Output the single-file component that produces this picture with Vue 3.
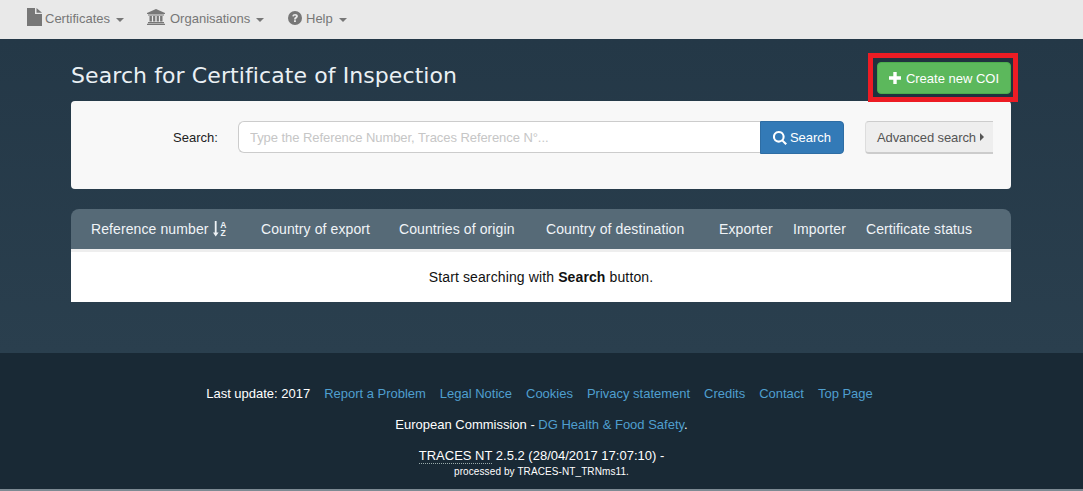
<script setup>
const nav = [
  { label: 'Certificates', icon: 'file' },
  { label: 'Organisations', icon: 'bank' },
  { label: 'Help', icon: 'help' }
]
const cols = ['Country of export', 'Countries of origin', 'Country of destination', 'Exporter', 'Importer', 'Certificate status']
const links = ['Report a Problem', 'Legal Notice', 'Cookies', 'Privacy statement', 'Credits', 'Contact', 'Top Page']
</script>

<template>
  <div class="page">
    <nav class="nav">
      <a v-for="n in nav" :key="n.label" class="nav-item" :class="'ni-' + n.icon">
        <svg v-if="n.icon === 'file'" class="i-file" viewBox="0 0 15 18"><path d="M0 0h8v6h7v12H0zM9.500 0L15 4.700H9.500z" fill="#777"/></svg>
        <svg v-else-if="n.icon === 'bank'" class="i-bank" viewBox="0 0 18 16"><path d="M9 0l9 4v1H0V4zM1 5.600h16v.9H1zM2.500 7h2.400v5.500H2.500zM6.100 7h2.200v5.500H6.100zM9.700 7h2.200v5.500H9.700zM13.100 7h2.400v5.500h-2.400zM1 13h16v1.200H1zM0 14.800h18V16H0z" fill="#777"/></svg>
        <svg v-else class="i-help" viewBox="0 0 14 14"><circle cx="7" cy="7" r="7" fill="#777"/><path d="M4.300 5.200C4.500 3.700 5.700 3 7.100 3c1.500 0 2.800.9 2.800 2.300 0 1.900-2 1.900-2 3.100H6c0-2.200 2-2.200 2-3.100 0-.5-.4-.8-1-.8-.6 0-1 .3-1.200 1zM6 9.300h1.900v1.800H6z" fill="#e9e9e9"/></svg>
        <span class="nav-label">{{ n.label }}</span>
        <i class="caret"></i>
      </a>
    </nav>

    <main class="main">
      <div class="head">
        <h1>Search for Certificate of Inspection</h1>
        <div class="highlight">
          <button class="create">
            <svg class="i-plus" viewBox="0 0 12 12"><path d="M4.300 0h3.400v4.300H12v3.400H7.700V12H4.300V7.700H0V4.300h4.300z" fill="#fff"/></svg>
            Create new COI
          </button>
        </div>
      </div>

      <section class="search-card">
        <label>Search:</label>
        <div class="group">
          <input type="text" placeholder="Type the Reference Number, Traces Reference N°..." />
          <button class="search">
            <svg class="i-search" viewBox="0 0 14 14"><path d="M5.800 0a5.800 5.800 0 0 1 4.700 9.200l3.500 3.300-1.600 1.500-3.400-3.400A5.800 5.800 0 1 1 5.800 0zm0 2a3.800 3.800 0 1 0 0 7.600 3.800 3.800 0 0 0 0-7.600z" fill="#fff"/></svg>
            Search
          </button>
        </div>
        <button class="advanced">Advanced search<i class="caret-right"></i></button>
      </section>

      <section class="table">
        <div class="thead">
          <span class="th first">Reference number
            <svg class="i-sort" viewBox="0 0 14 16"><path d="M1.800 0h1.800v11.500h2L2.700 15.500 0 11.500h1.800z" fill="#eef2f5"/><text x="7.300" y="6.700" class="sort-t">A</text><text x="7.500" y="15.400" class="sort-t">Z</text></svg>
          </span>
          <span v-for="c in cols" :key="c" class="th">{{ c }}</span>
        </div>
        <div class="tbody">Start searching with <b>Search</b> button.</div>
      </section>
    </main>

    <footer class="footer">
      <div class="f-links">
        <span>Last update: 2017</span>
        <a v-for="l in links" :key="l">{{ l }}</a>
      </div>
      <div class="f-ec">European Commission - <a>DG Health &amp; Food Safety</a>.</div>
      <div class="f-ver"><span class="abbr">TRACES NT</span> 2.5.2 (28/04/2017 17:07:10) -</div>
      <div class="f-proc">processed by TRACES-NT_TRNms11.</div>
    </footer>
  </div>
</template>

<style>
html, body { margin: 0; background: #192935; }
</style>

<style scoped>
.page {
  width: 1083px;
  height: 491px;
  overflow: hidden;
  display: flex;
  flex-direction: column;
  font-family: "Liberation Sans", Arial, sans-serif;
  font-size: 13px;
  line-height: 20px;
}
.nav {
  height: 39px;
  flex: none;
  background: #e9e9e9;
  display: flex;
  align-items: center;
  padding: 0 0 2px 27px;
  box-sizing: border-box;
}
.nav-item { display: flex; align-items: center; color: #777; }
.ni-file { width: 120px; }
.ni-bank { width: 141px; }
.nav-label { margin-left: 3px; }
.i-file { width: 15px; height: 18px; margin-top: -3px; }
.i-bank { width: 18px; height: 16px; margin-top: -3px; margin-right: 2px; }
.i-help { width: 14px; height: 14px; margin-top: -2px; margin-right: 1px; }
.caret {
  margin-left: 6px;
  margin-top: 2px;
  width: 0; height: 0;
  border-left: 4px solid transparent;
  border-right: 4px solid transparent;
  border-top: 4px solid #777;
}
.main {
  height: 314px;
  flex: none;
  box-sizing: border-box;
  background: linear-gradient(#243847, #2a3f4e);
  padding: 0 72px 0 71px;
}
.head {
  height: 62px;
  display: flex;
  justify-content: space-between;
  align-items: flex-start;
}
h1 {
  margin: 23px 0 0;
  font-family: "DejaVu Sans", Verdana, sans-serif;
  font-size: 22px;
  font-weight: 400;
  line-height: 27px;
  letter-spacing: .09px;
  color: #eaf0f4;
}
.highlight {
  margin: 14px -7px 0 0;
  border: 5px solid #ed1c24;
  padding: 4px 2px 3px 4px;
  width: 150px;
  height: 49px;
  box-sizing: border-box;
  background: #20323f;
}
.create {
  width: 134px;
  height: 32px;
  padding: 0;
  border: 1px solid #4cae4c;
  border-radius: 4px;
  background: #5cb85c;
  color: #fff;
  font: 13px "Liberation Sans", Arial, sans-serif;
  display: flex;
  align-items: center;
  justify-content: center;
  gap: 5px;
}
.i-plus { width: 12px; height: 12px; }
.search-card {
  height: 88px;
  box-sizing: border-box;
  background: #f8f8f8;
  border-radius: 4px;
  display: flex;
  align-items: flex-start;
  padding: 20px 18px 0 102px;
}
label { color: #222; line-height: 33px; width: 65px; flex: none; }
.group { display: flex; width: 606px; height: 33px; flex: none; }
input {
  flex: 1;
  min-width: 0;
  box-sizing: border-box;
  height: 32px;
  padding: 0 11px;
  border: 1px solid #ccc;
  border-right: 0;
  border-radius: 6px 0 0 6px;
  background: #fff;
  font: 13px "Liberation Sans", Arial, sans-serif;
  letter-spacing: -.06px;
  outline: none;
}
input::placeholder { color: #c6c6c6; opacity: 1; }
.search {
  width: 84px;
  height: 33px;
  padding: 0;
  border: 1px solid #2e6da4;
  border-radius: 0 4px 4px 0;
  background: #337ab7;
  color: #fff;
  font: 13px "Liberation Sans", Arial, sans-serif;
  display: flex;
  align-items: center;
  justify-content: center;
  gap: 3px;
}
.i-search { width: 14px; height: 14px; }
.advanced {
  margin-left: 21px;
  margin-top: 0;
  width: 128px;
  height: 33px;
  padding: 0 0 0 11px;
  text-align: left;
  border: 0;
  border-top: 1px solid #ccc;
  border-left: 1px solid #ddd;
  border-bottom: 2px solid #ccc;
  border-radius: 4px 0 0 4px;
  background: #eee;
  color: #555;
  font: 13px "Liberation Sans", Arial, sans-serif;
  letter-spacing: -.1px;
  white-space: nowrap;
}
.caret-right {
  display: inline-block;
  margin-left: 4px;
  margin-bottom: 1px;
  width: 0; height: 0;
  border-top: 4px solid transparent;
  border-bottom: 4px solid transparent;
  border-left: 4px solid #555;
}
.table { margin-top: 20px; }
.thead {
  height: 40px;
  background: #566a77;
  border-radius: 8px 8px 0 0;
  display: grid;
  grid-template-columns: 170px 138px 147px 173px 74px 73px 1fr;
  align-items: center;
  padding-left: 20px;
  color: #f0f4f7;
  font-size: 14px;
  letter-spacing: .1px;
}
.th { white-space: nowrap; display: flex; align-items: center; gap: 4px; }
.i-sort { width: 14px; height: 16px; }
.sort-t { font: bold 8.500px "Liberation Sans", Arial, sans-serif; fill: #eef2f5; }
.tbody {
  height: 53px;
  box-sizing: border-box;
  background: #fff;
  border-top: 3px solid #eee;
  text-align: center;
  line-height: 50px;
  color: #111;
  font-size: 14px;
  letter-spacing: .12px;
  white-space: pre;
}
.tbody b { font-weight: 700; }
.footer {
  flex: 1;
  background: #192935;
  border-bottom: 2px solid #7d8a93;
  color: #fff;
  text-align: center;
  padding-top: 31px;
  box-sizing: border-box;
}
a { color: #4f9fcf; }
.f-links { display: flex; justify-content: center; gap: 14px; height: 20px; padding-right: 4px; letter-spacing: -.01px; }
.f-ec { margin-top: 11px; height: 20px; }
.f-ver { margin-top: 11px; height: 20px; }
.abbr { border-bottom: 1px dotted #9aa; }
.f-proc { font-size: 10px; line-height: 14px; margin-top: -1px; letter-spacing: .1px; }
</style>
